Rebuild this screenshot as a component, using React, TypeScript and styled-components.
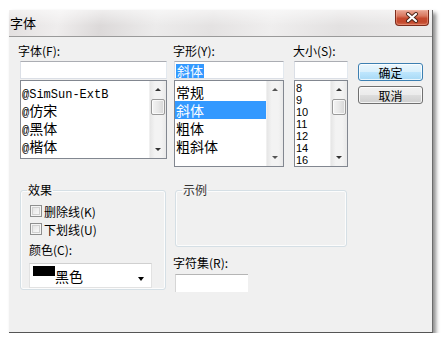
import React from 'react';
import styled, { createGlobalStyle } from 'styled-components';

const Global = createGlobalStyle`
  html, body { margin: 0; padding: 0; background: #ffffff; }
  body {
    font-family: "Noto Sans CJK SC", "Liberation Sans", sans-serif;
    font-size: 12px;
    color: #000;
  }
  * { box-sizing: border-box; }
`;

const Window = styled.div`
  margin: 10px 0 0 9px;
  width: 424px;
  height: 323px;
  border-right: 1px solid #6b6b6b;
  border-bottom: 1px solid #555;
  box-shadow: 3px 3px 4px rgba(0, 0, 0, 0.45);
  background: #f0f0f0;
  display: flex;
  flex-direction: column;
`;

const TitleBar = styled.div`
  height: 27px;
  flex: none;
  display: flex;
  align-items: flex-start;
  justify-content: space-between;
  border-bottom: 1px solid #9a9a9a;
  background:
    linear-gradient(to bottom, rgba(255,255,255,0.55), rgba(255,255,255,0) 60%),
    linear-gradient(100deg, #e2dfdf 0%, #efeded 12%, #dcd9d9 22%, #ecebeb 35%, #e4e2e2 48%, #efeeee 62%, #e3e1e1 78%, #ebeaea 100%);
`;

const Title = styled.div`
  padding-left: 1px;
  height: 26px;
  line-height: 26px;
  font-size: 13px;
`;

const CloseButton = styled.div`
  width: 34px;
  height: 16px;
  margin-right: 3px;
  border: 1px solid #7d2b1b;
  border-top: none;
  border-radius: 0 0 4px 4px;
  background: linear-gradient(to bottom, #e9a897 0%, #d9785f 40%, #c54a2f 55%, #c2472c 80%, #d46b4f 100%);
  box-shadow: inset 0 0 0 1px rgba(255, 200, 180, 0.35);
  display: flex;
  align-items: center;
  justify-content: center;
`;

const Content = styled.div`
  flex: 1;
  padding: 6px 0 0 11px;
  display: flex;
  flex-direction: column;
`;

const TopRow = styled.div`
  display: flex;
  align-items: flex-start;
`;

const Column = styled.div<{ $w: number; $gap: number }>`
  width: ${(p) => p.$w}px;
  margin-right: ${(p) => p.$gap}px;
  display: flex;
  flex-direction: column;
  flex: none;
`;

const Label = styled.div<{ $shift?: number }>`
  height: 16px;
  line-height: 16px;
  margin-bottom: 2px;
  margin-left: ${(p) => p.$shift ?? 0}px;
  font-size: 12px;
  white-space: nowrap;
`;

const TextBox = styled.div<{ $w?: number }>`
  height: 18px;
  width: ${(p) => (p.$w ? `${p.$w}px` : 'auto')};
  background: #fff;
  border: 1px solid #dbdfe6;
  border-top-color: #abadb3;
  border-right-color: #e3e9ef;
  padding: 1px 0 0 1px;
  display: flex;
  align-items: center;
`;

const Selected = styled.span`
  background: #3399ff;
  color: #fff;
  font-size: 13px;
  line-height: 14px;
  height: 14px;
  padding: 0 1px;
`;

const ListBox = styled.div<{ $h: number }>`
  margin-top: 1px;
  height: ${(p) => p.$h}px;
  border: 1px solid #828790;
  background: #fff;
  display: flex;
  overflow: hidden;
`;

const Items = styled.div<{ $top: number }>`
  flex: 1;
  padding-top: ${(p) => p.$top}px;
  overflow: hidden;
`;

const Item = styled.div<{ $selected?: boolean }>`
  height: 18px;
  line-height: 18px;
  font-size: 14px;
  padding-left: 1px;
  white-space: nowrap;
  background: ${(p) => (p.$selected ? '#3399ff' : 'transparent')};
  color: ${(p) => (p.$selected ? '#fff' : '#000')};
`;

const SizeItem = styled.div`
  height: 12px;
  line-height: 12px;
  font-size: 11px;
  padding-left: 1px;
  font-family: "Liberation Sans", sans-serif;
`;

const Mono = styled.span`
  font-family: "Liberation Mono", monospace;
  font-size: 12px;
`;

const ScrollBar = styled.div`
  width: 17px;
  flex: none;
  display: flex;
  flex-direction: column;
  background: linear-gradient(to right, #e6e6e6 0%, #f3f3f3 30%, #f3f3f3 70%, #e9e9e9 100%);
  border-left: 1px solid #f0f0f0;
`;

const ScrollBtn = styled.div`
  height: 17px;
  flex: none;
  display: flex;
  align-items: center;
  justify-content: center;
`;

const Arrow = styled.div<{ $down?: boolean; $color?: string }>`
  width: 0;
  height: 0;
  border-left: 3px solid transparent;
  border-right: 3px solid transparent;
  ${(p) =>
    p.$down
      ? `border-top: 3px solid ${p.$color ?? '#333'};`
      : `border-bottom: 3px solid ${p.$color ?? '#333'};`}
`;

const Thumb = styled.div`
  height: 16px;
  margin: 1px 1px 0;
  border: 1px solid #9a9a9a;
  border-radius: 2px;
  background: linear-gradient(to right, #f4f4f4 0%, #e8e8e8 50%, #d6d6d6 100%);
  box-shadow: inset 0 0 0 1px rgba(255, 255, 255, 0.7);
`;

const Spacer = styled.div`
  flex: 1;
`;

const ButtonCol = styled.div`
  width: 65px;
  padding-top: 20px;
  display: flex;
  flex-direction: column;
  gap: 5px;
`;

const Button = styled.div<{ $default?: boolean }>`
  height: 18px;
  border-radius: 3px;
  border: 1px solid ${(p) => (p.$default ? '#3c7fb1' : '#707070')};
  background: ${(p) =>
    p.$default
      ? 'linear-gradient(to bottom, #eaf6fd 0%, #d9f0fc 48%, #bee6fd 52%, #a7d9f5 100%)'
      : 'linear-gradient(to bottom, #f2f2f2 0%, #ebebeb 48%, #dddddd 52%, #cfcfcf 100%)'};
  box-shadow: inset 0 0 0 1px rgba(255, 255, 255, 0.75);
  display: flex;
  align-items: center;
  justify-content: center;
  font-size: 12px;
`;

const BottomRow = styled.div`
  display: flex;
  align-items: flex-start;
  margin-top: 16px;
`;

const Group = styled.fieldset<{ $w: number; $pl: number }>`
  margin: 0;
  width: ${(p) => p.$w}px;
  padding: 0 0 1px ${(p) => p.$pl}px;
  border: 1px solid #d5dfe5;
  border-radius: 3px;
  box-shadow: inset 0 0 0 1px rgba(255, 255, 255, 0.8);
  min-width: 0;
  flex: none;
`;

const Legend = styled.legend<{ $shift: number; $muted?: boolean }>`
  margin-left: ${(p) => p.$shift}px;
  padding: 0 1px;
  height: 14px;
  line-height: 14px;
  font-size: 12px;
  color: ${(p) => (p.$muted ? '#333' : '#000')};
`;

const GroupBody = styled.div`
  padding-top: 5px;
  display: flex;
  flex-direction: column;
`;

const CheckRow = styled.div`
  height: 18px;
  display: flex;
  align-items: center;
  gap: 2px;
  font-size: 12px;
`;

const CheckBox = styled.div`
  width: 12px;
  height: 12px;
  border: 1px solid #8e8f8f;
  background: linear-gradient(135deg, #dcdcdc 0%, #f2f2f2 60%, #fbfbfb 100%);
  box-shadow: inset 0 0 0 1px #f4f4f4, inset 0 0 0 2px #d0d0d0;
`;

const FieldLabel = styled.div<{ $shift?: number; $mt: number }>`
  height: 18px;
  line-height: 18px;
  margin-top: ${(p) => p.$mt}px;
  margin-left: ${(p) => p.$shift ?? 0}px;
  font-size: 12px;
  white-space: nowrap;
`;

const Combo = styled.div`
  margin: 4px 0 0 -1px;
  width: 123px;
  height: 25px;
  background: #fff;
  border: 1px solid #e2e2e2;
  border-top-color: #d0d0d0;
  display: flex;
  align-items: center;
  padding: 0 7px 0 3px;
`;

const Swatch = styled.div`
  width: 22px;
  height: 10px;
  background: #000;
  align-self: flex-start;
  margin-top: 2px;
  flex: none;
`;

const ComboText = styled.div`
  flex: 1;
  font-size: 14px;
  line-height: 18px;
`;

const ComboArrow = styled.div`
  width: 0;
  height: 0;
  border-left: 3.5px solid transparent;
  border-right: 3.5px solid transparent;
  border-top: 4px solid #000;
  margin-top: 6px;
`;

const RightCol = styled.div`
  margin-left: 9px;
  display: flex;
  flex-direction: column;
`;

const SampleBody = styled.div`
  height: 48px;
`;

const CharsetLabel = styled.div`
  height: 16px;
  line-height: 16px;
  margin: 8px 0 0 -2px;
  font-size: 12px;
`;

const CharsetBox = styled.div`
  margin-top: 3px;
  width: 73px;
  height: 18px;
  background: #fff;
  border-top: 1px solid #b5b5b5;
  border-left: 1px solid #d6d6d6;
`;

function ListScroll({ thumb, arrowColor }: { thumb?: boolean; arrowColor?: string }) {
  return (
    <ScrollBar>
      <ScrollBtn>
        <Arrow $color={arrowColor} />
      </ScrollBtn>
      {thumb && <Thumb />}
      <Spacer />
      <ScrollBtn>
        <Arrow $down $color={arrowColor} />
      </ScrollBtn>
    </ScrollBar>
  );
}

export default function App() {
  return (
    <>
      <Global />
      <Window>
        <TitleBar>
          <Title>字体</Title>
          <CloseButton>
            <svg width="14" height="11" viewBox="0 0 14 11">
              <path d="M3 2 L11 9 M11 2 L3 9" stroke="#4a2418" strokeWidth="4" strokeLinecap="round" />
              <path d="M3 2 L11 9 M11 2 L3 9" stroke="#ffffff" strokeWidth="2.2" strokeLinecap="round" />
            </svg>
          </CloseButton>
        </TitleBar>
        <Content>
          <TopRow>
            <Column $w={147} $gap={7}>
              <Label $shift={-2}>字体(F):</Label>
              <TextBox />
              <ListBox $h={79}>
                <Items $top={2}>
                  <Item><Mono>@SimSun-ExtB</Mono></Item>
                  <Item><Mono>@</Mono>仿宋</Item>
                  <Item><Mono>@</Mono>黑体</Item>
                  <Item><Mono>@</Mono>楷体</Item>
                </Items>
                <ListScroll thumb />
              </ListBox>
            </Column>
            <Column $w={110} $gap={10}>
              <Label $shift={-1}>字形(Y):</Label>
              <TextBox>
                <Selected>斜体</Selected>
              </TextBox>
              <ListBox $h={87}>
                <Items $top={2}>
                  <Item>常规</Item>
                  <Item $selected>斜体</Item>
                  <Item>粗体</Item>
                  <Item>粗斜体</Item>
                </Items>
                <ListScroll arrowColor="#555" />
              </ListBox>
            </Column>
            <Column $w={54} $gap={10}>
              <Label $shift={-1}>大小(S):</Label>
              <TextBox />
              <ListBox $h={87}>
                <Items $top={1}>
                  {['8', '9', '10', '11', '12', '14', '16'].map((s) => (
                    <SizeItem key={s}>{s}</SizeItem>
                  ))}
                </Items>
                <ListScroll thumb />
              </ListBox>
            </Column>
            <ButtonCol>
              <Button $default>确定</Button>
              <Button>取消</Button>
            </ButtonCol>
          </TopRow>
          <BottomRow>
            <Group $w={146} $pl={9}>
              <Legend $shift={-3}>效果</Legend>
              <GroupBody>
                <CheckRow>
                  <CheckBox />
                  删除线(K)
                </CheckRow>
                <CheckRow>
                  <CheckBox />
                  下划线(U)
                </CheckRow>
                <FieldLabel $shift={-1} $mt={3}>颜色(C):</FieldLabel>
                <Combo>
                  <Swatch />
                  <ComboText>黑色</ComboText>
                  <ComboArrow />
                </Combo>
              </GroupBody>
            </Group>
            <RightCol>
              <Group $w={172} $pl={6}>
                <Legend $shift={0} $muted>示例</Legend>
                <SampleBody />
              </Group>
              <CharsetLabel>字符集(R):</CharsetLabel>
              <CharsetBox />
            </RightCol>
          </BottomRow>
        </Content>
      </Window>
    </>
  );
}
